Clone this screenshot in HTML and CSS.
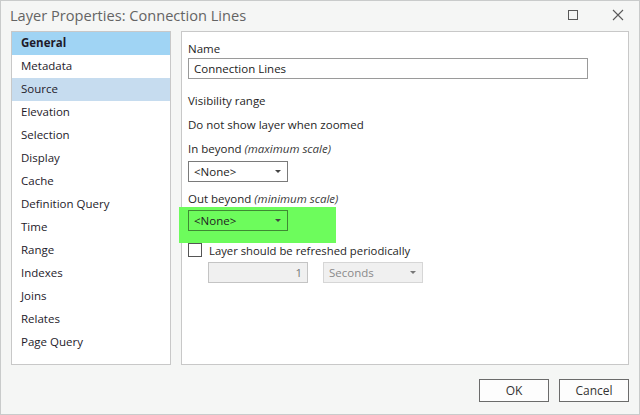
FILE: index.html
```html
<!DOCTYPE html>
<html lang="en">
<head>
    <meta charset="UTF-8">
    <title>Layer Properties: Connection Lines</title>
    <link rel="stylesheet" href="styles.css">
</head>
<body>
    <div class="window">
        <div class="titlebar">
            <span class="title">Layer Properties: Connection Lines</span>
            <span class="win-btn" title="Maximize">
                <svg width="12" height="12" viewBox="0 0 12 12"><rect x="1.5" y="1.5" width="9" height="9" fill="none" stroke="#595959" stroke-width="1"/></svg>
            </span>
            <span class="win-btn" title="Close">
                <svg width="12" height="12" viewBox="0 0 12 12"><path d="M1 1 L11 11 M11 1 L1 11" stroke="#595959" stroke-width="1.1"/></svg>
            </span>
        </div>

        <div class="main">
            <ul class="nav">
                <li class="active">General</li>
                <li>Metadata</li>
                <li class="hover">Source</li>
                <li>Elevation</li>
                <li>Selection</li>
                <li>Display</li>
                <li>Cache</li>
                <li>Definition Query</li>
                <li>Time</li>
                <li>Range</li>
                <li>Indexes</li>
                <li>Joins</li>
                <li>Relates</li>
                <li>Page Query</li>
            </ul>

            <div class="panel">
                <div class="label first">Name</div>
                <input class="text-input" type="text" value="Connection Lines">

                <div class="label gap-lg">Visibility range</div>
                <div class="label gap-sm">Do not show layer when zoomed</div>

                <div class="label gap-sm">In beyond <em>(maximum scale)</em></div>
                <div class="combo">
                    <span>&lt;None&gt;</span>
                    <span class="arrow"></span>
                </div>

                <div class="label gap-md">Out beyond <em>(minimum scale)</em></div>
                <div class="marker">
                    <div class="combo">
                        <span>&lt;None&gt;</span>
                        <span class="arrow"></span>
                    </div>
                </div>

                <label class="check-row">
                    <span class="checkbox"></span>
                    <span>Layer should be refreshed periodically</span>
                </label>

                <div class="interval">
                    <div class="num-input">1</div>
                    <div class="combo disabled">
                        <span>Seconds</span>
                        <span class="arrow"></span>
                    </div>
                </div>
            </div>
        </div>

        <div class="footer">
            <button class="btn">OK</button>
            <button class="btn">Cancel</button>
        </div>
    </div>
</body>
</html>
```

FILE: styles.css
```css
* {
    box-sizing: border-box;
}

body {
    margin: 0;
    font-family: 'Open Sans', 'Noto Sans', sans-serif;
    font-size: 11.5px;
    color: #222;
}

.window {
    width: 640px;
    height: 415px;
    background: #f5f6f5;
    border: 1px solid #c9cbcb;
    display: flex;
    flex-direction: column;
}

/* title bar */
.titlebar {
    height: 30px;
    display: flex;
    align-items: center;
    padding: 0 10px 0 9px;
}

.title {
    flex: 1;
    font-size: 14.6px;
    color: #646464;
    margin-top: -2px;
}

.win-btn {
    display: flex;
    margin-left: 32px;
    margin-top: -2px;
}

.win-btn:last-child {
    margin-left: 33px;
    margin-right: 5px;
}

/* pages list + page */
.main {
    display: flex;
    gap: 10px;
    padding: 0 10px 0 10px;
    height: 334px;
}

.nav {
    list-style: none;
    margin: 0;
    padding: 0;
    width: 160px;
    background: #fff;
    border: 1px solid #c8c8c8;
}

.nav li {
    height: 23px;
    line-height: 22px;
    padding-left: 9px;
    color: #1e1a2a;
}

.nav li.active {
    background: #a0d4f4;
    font-weight: bold;
}

.nav li.hover {
    background: #c6dcef;
}

.panel {
    flex: 1;
    background: #fff;
    border: 1px solid #c8c8c8;
    padding: 0 6px;
}

.label {
    height: 16px;
    line-height: 16px;
    color: #262626;
}

.label em {
    color: #3a3a3a;
}

.label.first {
    margin-top: 9px;
}

.label.gap-lg {
    margin-top: 14px;
}

.label.gap-sm {
    margin-top: 8px;
}

.label.gap-md {
    margin-top: 9px;
}

.text-input {
    display: block;
    width: 400px;
    height: 21px;
    margin-top: 1px;
    border: 1px solid #9a9a9a;
    padding: 0 5px;
    font: inherit;
    color: #222;
}

.combo {
    width: 100px;
    height: 21px;
    margin-top: 4px;
    border: 1px solid #7a7a7a;
    display: flex;
    align-items: center;
    justify-content: space-between;
    padding: 0 6px 0 5px;
    background: #fff;
}

.arrow {
    width: 0;
    height: 0;
    border-left: 3px solid transparent;
    border-right: 3px solid transparent;
    border-top: 3px solid #444;
}

/* green annotation round the second combo */
.marker {
    width: 157px;
    margin-left: -9px;
    padding: 3px 0 12px 9px;
    background: #6dfc5c;
}

.marker .combo {
    margin-top: 0;
    background: transparent;
    border-color: #3f8a34;
}

.check-row {
    display: flex;
    align-items: center;
    gap: 7px;
    height: 14px;
    color: #262626;
    font-size: 11.3px;
}

.checkbox {
    width: 14px;
    height: 14px;
    border: 1px solid #555;
    background: #fff;
}

.interval {
    display: flex;
    gap: 15px;
    margin-top: 5px;
    padding-left: 20px;
}

.num-input {
    width: 100px;
    height: 21px;
    border: 1px solid #c4c4c4;
    background: #f0f0f0;
    color: #777;
    text-align: right;
    line-height: 19px;
    padding-right: 5px;
}

.combo.disabled {
    margin-top: 0;
    border-color: #d6d6d6;
    background: #f0f0f0;
    color: #8a8a8a;
}

.combo.disabled .arrow {
    border-top-color: #777;
}

/* dialog buttons */
.footer {
    display: flex;
    justify-content: flex-end;
    gap: 10px;
    padding: 14px 10px 0 0;
}

.btn {
    width: 70px;
    height: 23px;
    background: #fdfdfd;
    border: 1px solid #6b6b6b;
    font: inherit;
    font-size: 12px;
    color: #333;
}
```
